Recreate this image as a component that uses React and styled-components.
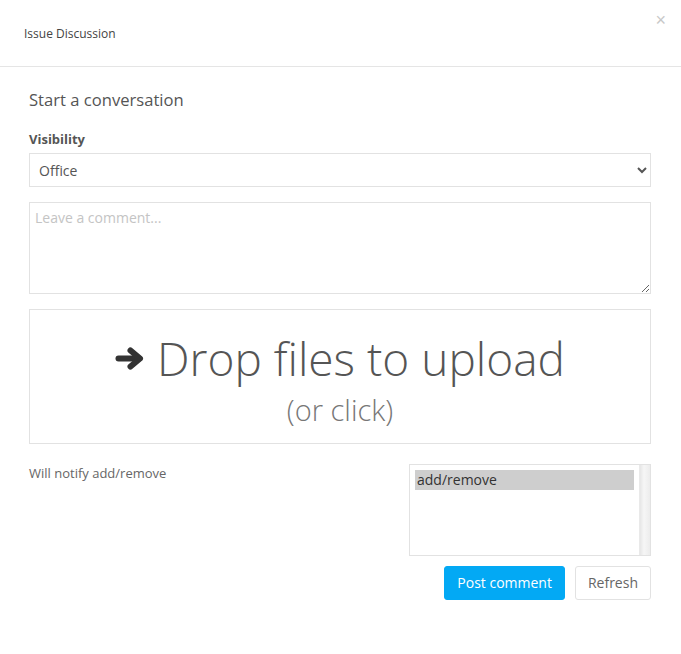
import React from "react";
import styled, { createGlobalStyle } from "styled-components";

const GlobalStyle = createGlobalStyle`
  html, body {
    margin: 0;
    padding: 0;
    background: #fff;
  }
  body {
    font-family: "Open Sans", "Noto Sans", sans-serif;
    color: #555;
  }
  * {
    box-sizing: border-box;
  }
`;

const ArrowIcon = () => (
  <svg width="30" height="23" viewBox="0 0 30 23" aria-hidden="true">
    <g fill="none" stroke="currentColor" strokeWidth="6" strokeLinecap="round" strokeLinejoin="round">
      <line x1="3.5" y1="11.5" x2="24" y2="11.5" />
      <polyline points="15.5,3.5 25,11.5 15.5,19.5" />
    </g>
  </svg>
);

const App = () => {
  return (
    <>
      <GlobalStyle />
      <Modal>
        <Header>
          <Title>Issue Discussion</Title>
          <Close aria-label="Close">×</Close>
        </Header>

        <Body>
          <Heading>Start a conversation</Heading>

          <Field>
            <Label htmlFor="visibility">Visibility</Label>
            <Select id="visibility" defaultValue="office">
              <option value="office">Office</option>
              <option value="public">Public</option>
            </Select>
          </Field>

          <Comment placeholder="Leave a comment..." />

          <DropZone>
            <DropTitle>
              <ArrowIcon />
              <span>Drop files to upload</span>
            </DropTitle>
            <DropHint>(or click)</DropHint>
          </DropZone>

          <NotifyRow>
            <NotifyText>Will notify add/remove</NotifyText>
            <Side>
              <ListBox>
                <Options>
                  <Option selected>add/remove</Option>
                </Options>
                <ScrollTrack />
              </ListBox>
              <Actions>
                <Button primary>Post comment</Button>
                <Button>Refresh</Button>
              </Actions>
            </Side>
          </NotifyRow>
        </Body>
      </Modal>
    </>
  );
};

export default App;

const Modal = styled.div`
  width: 681px;
  min-height: 654px;
  background: #fff;
`;

const Header = styled.div`
  position: relative;
  display: flex;
  align-items: center;
  height: 67px;
  padding: 0 24px;
  border-bottom: 1px solid #e5e5e5;
`;

const Title = styled.h4`
  margin: 0;
  font-size: 12px;
  font-weight: 400;
  color: #444;
`;

const Close = styled.button`
  position: absolute;
  top: 11px;
  right: 15px;
  padding: 0;
  border: none;
  background: none;
  font-family: "Liberation Sans", sans-serif;
  font-size: 18px;
  line-height: 1;
  color: #c8c8c8;
  cursor: pointer;
`;

const Body = styled.div`
  display: flex;
  flex-direction: column;
  padding: 22px 30px 0 29px;
`;

const Heading = styled.h3`
  margin: 0 0 19px;
  font-size: 16.6px;
  line-height: 22px;
  font-weight: 400;
  color: #555;
`;

const Field = styled.div`
  display: flex;
  flex-direction: column;
  gap: 5px;
  margin-bottom: 15px;
`;

const Label = styled.label`
  font-size: 13px;
  line-height: 18px;
  font-weight: 700;
  color: #555;
`;

const Select = styled.select`
  height: 34px;
  padding: 0 5px;
  border: 1px solid #e2e2e2;
  border-radius: 0;
  background: #fff;
  font-family: inherit;
  font-size: 14px;
  color: #555;
  outline: none;
`;

const Comment = styled.textarea`
  height: 92px;
  margin: 0 0 15px;
  padding: 5px 5px;
  border: 1px solid #e2e2e2;
  font-family: inherit;
  font-size: 14px;
  line-height: 20px;
  color: #555;
  outline: none;

  &::placeholder {
    color: #c4c4c4;
  }
`;

const DropZone = styled.div`
  display: flex;
  flex-direction: column;
  align-items: center;
  height: 135px;
  padding-top: 17px;
  border: 1px solid #e2e2e2;
  cursor: pointer;
`;

const DropTitle = styled.div`
  display: flex;
  align-items: center;
  gap: 12px;
  font-size: 46px;
  line-height: 62px;
  font-weight: 300;
  color: #555;

  svg {
    margin-top: 1px;
    color: #333;
  }
`;

const DropHint = styled.div`
  margin-top: 1px;
  font-size: 29px;
  line-height: 40px;
  font-weight: 300;
  color: #777;
`;

const NotifyRow = styled.div`
  display: flex;
  justify-content: space-between;
  margin-top: 20px;
`;

const NotifyText = styled.div`
  font-size: 13px;
  line-height: 18px;
  color: #666;
`;

const Side = styled.div`
  display: flex;
  flex-direction: column;
  align-items: flex-end;
  gap: 10px;
`;

const ListBox = styled.div`
  display: flex;
  width: 242px;
  height: 92px;
  border: 1px solid #e2e2e2;
`;

const Options = styled.div`
  flex: 1;
  padding: 5px;
`;

const Option = styled.div`
  height: 20px;
  padding: 0 2px;
  font-size: 14px;
  line-height: 20px;
  color: #333;
  background: ${({ selected }) => (selected ? "#cecece" : "transparent")};
`;

const ScrollTrack = styled.div`
  width: 11px;
  background: linear-gradient(to right, #e6e6e6, #f6f6f6 40%, #ececec);
  border-left: 1px solid #e9e9e9;
`;

const Actions = styled.div`
  display: flex;
  gap: 10px;
`;

const Button = styled.button`
  height: 34px;
  padding: 0 12px;
  border: 1px solid ${({ primary }) => (primary ? "#03a9f4" : "#e2e2e2")};
  border-radius: 3px;
  background: ${({ primary }) => (primary ? "#03a9f4" : "#fff")};
  color: ${({ primary }) => (primary ? "#fff" : "#666")};
  font-family: inherit;
  font-size: 14px;
  line-height: 32px;
  cursor: pointer;
`;
